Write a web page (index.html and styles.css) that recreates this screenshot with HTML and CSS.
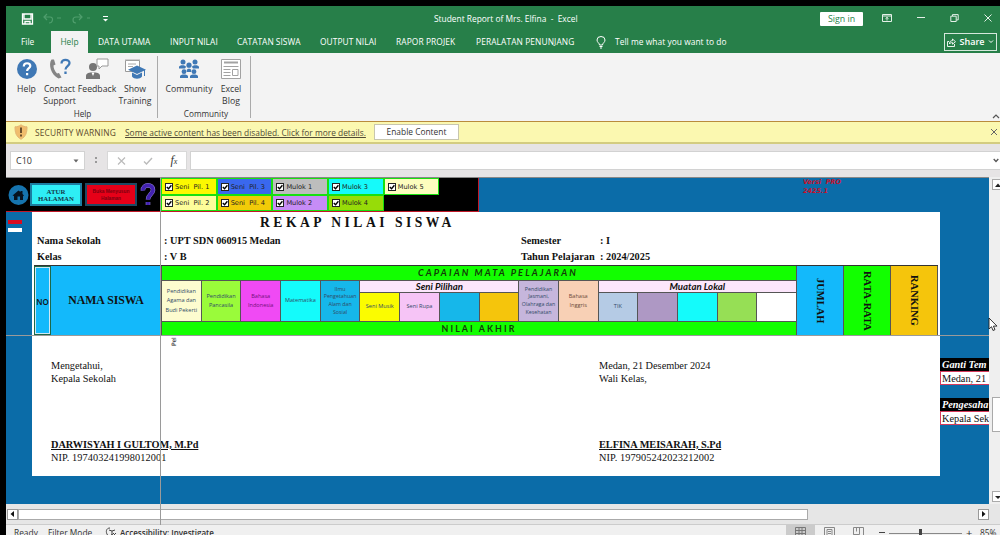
FILE: index.html
```html
<!DOCTYPE html>
<html lang="id">
<head>
    <meta charset="UTF-8">
    <meta name="viewport" content="width=device-width, initial-scale=1.0">
    <title>Student Report of Mrs. Elfina - Excel</title>
    <link rel="stylesheet" href="styles.css">
</head>
<body>

<div class="window">

    <!-- Title bar -->
    <div class="titlebar">
        <div class="quick">
            <svg width="13" height="12" viewBox="0 0 13 12" fill="none" stroke="#fff" stroke-width="1.3"><path d="M1.500 1h10v10h-10zM3 1v5h7V1M4 11V8.500h5v2.500"/></svg>
            <svg class="undo" width="24" height="12" viewBox="0 0 24 12" fill="none" stroke="#4f9e6d" stroke-width="1.200"><path d="M5 1L2 4l3 3M2 4h6c4 0 3 6-1 6M15 5h4"/></svg>
            <svg class="redo" width="24" height="12" viewBox="0 0 24 12" fill="none" stroke="#4f9e6d" stroke-width="1.200"><path d="M8 1l3 3-3 3M11 4H5c-4 0-4 6 0 6M16 5h3"/></svg>
            <svg class="more" width="7" height="8" viewBox="0 0 7 8"><path d="M1 1.500h5" stroke="#fff"/><path d="M1 4h5L3.500 6.500z" fill="#fff"/></svg>
        </div>
        <div class="doc-title">Student Report of Mrs. Elfina&nbsp; -&nbsp; Excel</div>
        <div class="win-buttons">
            <button class="signin">Sign in</button>
            <svg width="10" height="8" viewBox="0 0 10 8" fill="none" stroke="#e4f0e8"><path d="M.5.500h9v7h-9zM.5 2h9M5 6.500V3.500M3.500 4.700L5 3.400l1.500 1.300"/></svg>
            <svg width="8" height="8" viewBox="0 0 8 8" fill="none" stroke="#e4f0e8"><path d="M0 3.500h8"/></svg>
            <svg width="9" height="8" viewBox="0 0 9 8" fill="none" stroke="#e4f0e8"><path d="M.8 2.200h5.400v5.300H.8zM2.500 2V.6h5.700v5.300H6.500"/></svg>
            <svg width="8" height="8" viewBox="0 0 8 8" fill="none" stroke="#e4f0e8"><path d="M.5.500l7 7M7.500.500l-7 7"/></svg>
        </div>
    </div>

    <!-- Ribbon tabs -->
    <div class="tabs">
        <span class="tab file">File</span>
        <span class="tab active">Help</span>
        <span class="tab data">DATA UTAMA</span>
        <span class="tab input">INPUT NILAI</span>
        <span class="tab catatan">CATATAN SISWA</span>
        <span class="tab output">OUTPUT NILAI</span>
        <span class="tab rapor">RAPOR PROJEK</span>
        <span class="tab alat">PERALATAN PENUNJANG</span>
        <svg class="bulb" width="10" height="13" viewBox="0 0 10 13" fill="none" stroke="#fff"><path d="M3.500 9c0-2-2.500-2.500-2.500-5a4 3.500 0 0 1 8 0c0 2.500-2.500 3-2.500 5zM3.500 10.500h3M4 12h2"/></svg>
        <span class="tab tell">Tell me what you want to do</span>
        <button class="share">
            <svg width="9" height="9" viewBox="0 0 9 9" fill="none" stroke="#fff" stroke-width=".9"><path d="M2 3.500H.5v5h7V6M2.500 6c0-2.500 1-3.300 3-3.300V1l3 2.700-3 2.500V4.600c-1.500 0-2.500.4-3 1.400z"/></svg>
            Share
            <svg width="6" height="4" viewBox="0 0 6 4" fill="none" stroke="#fff"><path d="M1 .5l2 2 2-2"/></svg>
        </button>
    </div>

    <!-- Ribbon -->
    <div class="ribbon">
        <div class="group group-help">
            <div class="commands">
                <div class="cmd c-help">
                    <svg width="22" height="22" viewBox="0 0 22 22"><circle cx="11" cy="11" r="10" fill="#3f78b5"/><path d="M7.800 8.500c0-4.500 6.500-4 6.500-.5 0 2.200-3.200 2.200-3.200 5M11.100 15v2.300" fill="none" stroke="#fff" stroke-width="2.200"/></svg>
                    <span>Help</span>
                </div>
                <div class="cmd c-contact">
                    <svg width="24" height="22" viewBox="0 0 24 22"><path d="M3.500 1.500C0 6 3 17 10.500 20.500l3-1-2.500-4.500-2 .5C6.500 13 5.500 10 5.500 7.500L7.500 6.500 6 1.500z" fill="#858585"/><path d="M13.500 5.500c0-5 8-4.500 8-.5 0 3.200-4 3-4 6.500M17.500 13.500v2.500" fill="none" stroke="#3f78b5" stroke-width="2.300"/></svg>
                    <span>Contact<br>Support</span>
                </div>
                <div class="cmd c-feedback">
                    <svg width="24" height="22" viewBox="0 0 24 22"><circle cx="8" cy="9" r="4" fill="#757575"/><path d="M1 21v-3.500c0-4.500 14-4.500 14 0V21z" fill="#757575"/><path d="M12 1h11v7h-6l-3 3V8h-2z" fill="#fff" stroke="#999"/><path d="M6.500 14.500h3L8 18z" fill="#fff"/></svg>
                    <span>Feedback</span>
                </div>
                <div class="cmd c-training">
                    <svg width="22" height="22" viewBox="0 0 22 22"><path d="M1.500 2.500h14v11h-14z" fill="#fff" stroke="#999"/><path d="M1 2h15M4 6h8M4 8.500h5" stroke="#aaa"/><path d="M13 7.500l9 4.200-9 4.300-9-4.300z" fill="#3f78b5"/><path d="M8 14.500v4c2 3 8 3 10 0v-4l-5 2.500z" fill="#3f78b5"/><path d="M20.500 12v6" stroke="#3f78b5"/></svg>
                    <span>Show<br>Training</span>
                </div>
            </div>
            <div class="group-name">Help</div>
        </div>
        <div class="group group-community">
            <div class="commands">
                <div class="cmd c-community">
                    <svg width="22" height="22" viewBox="0 0 22 22" fill="#3f78b5"><circle cx="5" cy="4" r="2.500"/><circle cx="17" cy="4" r="2.500"/><circle cx="11" cy="7.200" r="2.600"/><path d="M1 10.500V9c0-2.500 7-2.500 7 0l-1 1.500zM14 9c0-2.500 7-2.500 7 0v1.500h-6z"/><circle cx="6" cy="13.700" r="2.400"/><circle cx="16" cy="13.700" r="2.400"/><path d="M8.700 12.500c0-2.500 4.600-2.500 4.600 0v1.500H8.700zM2 20v-1.700c0-2.500 8-2.500 8 0V20zM12 20v-1.700c0-2.500 8-2.500 8 0V20z"/></svg>
                    <span>Community</span>
                </div>
                <div class="cmd c-blog">
                    <svg width="22" height="22" viewBox="0 0 22 22" fill="none" stroke="#a2a2a2"><path d="M1.500 1.500h19v19h-19z" fill="#fff"/><path d="M4 4.500h14" stroke-width="2"/><path d="M3.500 8.500h15M3.500 11.500h7M3.500 14.500h7M3.500 17.500h7M12.500 11.500h5.500v6h-5.500z"/></svg>
                    <span>Excel<br>Blog</span>
                </div>
            </div>
            <div class="group-name">Community</div>
        </div>
        <svg class="collapse" width="8" height="5" viewBox="0 0 8 5" fill="none" stroke="#555" stroke-width="1.200"><path d="M1 4l3-3 3 3"/></svg>
    </div>

    <!-- Security warning -->
    <div class="warning">
        <svg width="14" height="16" viewBox="0 0 14 16"><path d="M7 .8c2 1.500 4 2 6 2 0 6-1 9.500-6 12.500C2 12.300 1 8.800 1 2.800c2 0 4-.5 6-2z" fill="#f0bd6c" stroke="#e3b674"/><path d="M7 3.500v5.500M7 10.500v2" stroke="#5b4326" stroke-width="1.800"/></svg>
        <span class="warn-label">SECURITY WARNING</span>
        <span class="warn-text">Some active content has been disabled. Click for more details.</span>
        <button class="enable">Enable Content</button>
        <svg class="warn-close" width="8" height="8" viewBox="0 0 8 8" fill="none" stroke="#666"><path d="M1 1l6 6M7 1L1 7"/></svg>
    </div>

    <!-- Formula bar -->
    <div class="formula">
        <div class="namebox">C10
            <svg width="6" height="4" viewBox="0 0 6 4"><path d="M.5.500h5L3 3.500z" fill="#666"/></svg>
        </div>
        <div class="dots"></div>
        <div class="fx">
            <svg width="9" height="8" viewBox="0 0 9 8" fill="none" stroke="#bbb" stroke-width="1.200"><path d="M1 .5l7 7M8 .5l-7 7"/></svg>
            <svg width="10" height="8" viewBox="0 0 10 8" fill="none" stroke="#bbb" stroke-width="1.400"><path d="M1 4.500L3.500 7 9 1"/></svg>
            <span><i>f</i><small>x</small></span>
        </div>
        <div class="formula-input">
            <svg width="6" height="5" viewBox="0 0 6 5" fill="none" stroke="#555" stroke-width="1.300"><path d="M.7 1L3 3.500 5.300 1"/></svg>
        </div>
    </div>

    <!-- Worksheet -->
    <div class="work">
        <div class="sheet">
            <div class="top">
                <div class="toolbar">
                    <div class="macros">
                        <svg width="21" height="22" viewBox="0 0 21 22"><circle cx="10.500" cy="11" r="10" fill="#1674ae"/><path d="M4.500 11.500l6-5 2 1.600V7h2v3l1.500 1.500-1 .8V16h-3v-3.500H9.500V16h-3.500v-4z" fill="#07121e"/></svg>
                        <button class="btn-atur">ATUR<br>HALAMAN</button>
                        <button class="btn-red">Buka Menyusun<br>Halaman</button>
                        <svg width="16" height="24" viewBox="0 0 16 24" fill="none"><path d="M3 7.500c-.5-7 10.500-6.500 10-.5-.3 4.500-5 4.500-5 9.500M8 19v3" stroke="#8d80d8" stroke-width="4.600"/><path d="M3 7.500c-.5-7 10.500-6.500 10-.5-.3 4.500-5 4.500-5 9.500M8 19v3" stroke="#4322b0" stroke-width="3.600"/></svg>
                    </div>
                    <div class="checks">
                        <label class="check c1"><svg viewBox="0 0 9 9"><path d="M2 4.500l2 2 3.200-4"/></svg>Seni&nbsp; Pil. 1</label>
                        <label class="check c2"><svg viewBox="0 0 9 9"><path d="M2 4.500l2 2 3.200-4"/></svg>Seni&nbsp; Pil. 3</label>
                        <label class="check c3"><svg viewBox="0 0 9 9"><path d="M2 4.500l2 2 3.200-4"/></svg>Mulok 1</label>
                        <label class="check c4"><svg viewBox="0 0 9 9"><path d="M2 4.500l2 2 3.200-4"/></svg>Mulok 3</label>
                        <label class="check c5"><svg viewBox="0 0 9 9"><path d="M2 4.500l2 2 3.200-4"/></svg>Mulok 5</label>
                        <label class="check c6"><svg viewBox="0 0 9 9"><path d="M2 4.500l2 2 3.200-4"/></svg>Seni&nbsp; Pil. 2</label>
                        <label class="check c7"><svg viewBox="0 0 9 9"><path d="M2 4.500l2 2 3.200-4"/></svg>Seni&nbsp; Pil. 4</label>
                        <label class="check c8"><svg viewBox="0 0 9 9"><path d="M2 4.500l2 2 3.200-4"/></svg>Mulok 2</label>
                        <label class="check c9"><svg viewBox="0 0 9 9"><path d="M2 4.500l2 2 3.200-4"/></svg>Mulok 4</label>
                    </div>
                </div>
                <div class="version">Versi&nbsp; PRO<br>2425.1</div>
            </div>

            <div class="body">
                <div class="marks">
                    <div class="mark red"></div>
                    <div class="mark"></div>
                </div>
                <div class="page">
                    <h1><span>REKAP NILAI SISWA</span></h1>
                    <div class="info">
                        <span>Nama Sekolah</span><span>: UPT SDN 060915 Medan</span><span>Semester</span><span>: I</span>
                        <span>Kelas</span><span>: V B</span><span>Tahun Pelajaran</span><span>: 2024/2025</span>
                    </div>

                    <div class="rekap">
                        <div class="no">NO</div>
                        <div class="nama">NAMA SISWA</div>
                        <div class="mapel">
                            <div class="cell head">CAPAIAN MATA PELAJARAN</div>
                            <div class="cell tall cream">Pendidikan<br>Agama dan<br>Budi Pekerti</div>
                            <div class="cell tall lime">Pendidikan<br>Pancasila</div>
                            <div class="cell tall pink">Bahasa<br>Indonesia</div>
                            <div class="cell tall cyan">Matematika</div>
                            <div class="cell tall tight blue">Ilmu<br>Pengetahuan<br>Alam dan<br>Sosial</div>
                            <div class="cell sub seni">Seni Pilihan</div>
                            <div class="cell tall tight lilac">Pendidikan<br>Jasmani,<br>Olahraga dan<br>Kesehatan</div>
                            <div class="cell tall peach">Bahasa<br>Inggris</div>
                            <div class="cell sub mulok">Muatan Lokal</div>
                            <div class="cell yellow">Seni Musik</div>
                            <div class="cell rose">Seni Rupa</div>
                            <div class="cell blue"></div>
                            <div class="cell gold"></div>
                            <div class="cell steel">TIK</div>
                            <div class="cell purple"></div>
                            <div class="cell cyan"></div>
                            <div class="cell leaf"></div>
                            <div class="cell white"></div>
                            <div class="cell foot">NILAI AKHIR</div>
                        </div>
                        <div class="side sky"><span>JUMLAH</span></div>
                        <div class="side green"><span>RATA-RATA</span></div>
                        <div class="side gold"><span>RANKING</span></div>
                    </div>

                    <div class="peek">Pel</div>

                    <div class="signs">
                        <div class="sign">
                            <p>Mengetahui,<br>Kepala Sekolah</p>
                            <p><b>DARWISYAH I GULTOM, M.Pd</b><br><span class="nip">NIP. 197403241998012001</span></p>
                        </div>
                        <div class="sign">
                            <p>Medan, 21 Desember 2024<br>Wali Kelas,</p>
                            <p><b>ELFINA MEISARAH, S.Pd</b><br><span class="nip">NIP. 197905242023212002</span></p>
                        </div>
                    </div>
                </div>
                <div class="extra">
                    <div class="extra-head">Ganti Tem</div>
                    <div class="extra-val">Medan, 21</div>
                    <div class="extra-head second">Pengesaha</div>
                    <div class="extra-val">Kepala Seko</div>
                </div>
            </div>
        </div>

        <div class="vscroll">
            <div class="arrow"><svg width="8" height="5" viewBox="0 0 8 5"><path d="M4 .5L7 4H1z" fill="#222"/></svg></div>
            <div class="vthumb"></div>
            <div class="arrow"><svg width="8" height="5" viewBox="0 0 8 5"><path d="M4 4L7 1H1z" fill="#222"/></svg></div>
        </div>

        <!-- Frozen pane lines and cursor -->
        <div class="freeze-v"></div>
        <div class="freeze-h"></div>
        <svg class="cursor" width="10" height="15" viewBox="0 0 10 15"><path d="M1 1v11l2.500-2.300L5 13.500l2-.9-1.600-3.500H9z" fill="#fff" stroke="#222" stroke-width=".9"/></svg>
    </div>

    <div class="hscroll">
        <div class="hbtn"><svg width="5" height="6" viewBox="0 0 5 6"><path d="M4 0v6L.5 3z" fill="#111"/></svg></div>
        <div class="hthumb"></div>
        <div class="hbtn last"><svg width="5" height="6" viewBox="0 0 5 6"><path d="M1 0v6l3.500-3z" fill="#111"/></svg></div>
    </div>

    <!-- Status bar -->
    <div class="status">
        <span class="ready">Ready</span>
        <span class="filter">Filter Mode</span>
        <svg class="acc" width="12" height="11" viewBox="0 0 12 11" fill="none" stroke="#444"><path d="M5 1C1 1 .5 5 2.500 8M4 3l3 1 3-1M7 4v3l-2 3M7 7l2 3M8 6l3 3M11 6L8 9"/></svg>
        <span class="access">Accessibility: Investigate</span>
        <div class="views">
            <span class="view on"><svg width="11" height="11" viewBox="0 0 11 11" fill="none" stroke="#777"><path d="M.5.500h10v10H.5zM.5 3.500h10M.5 6.500h10M4 .5v10M7 .5v10"/></svg></span>
            <span class="view"><svg width="11" height="11" viewBox="0 0 11 11" fill="none" stroke="#888"><path d="M.5.500h10v10H.5zM3 2.500h5v7H3zM4 4.500h3M4 6.500h3"/></svg></span>
            <span class="view"><svg width="11" height="11" viewBox="0 0 11 11" fill="none" stroke="#888"><path d="M.5.500h10v10M.5.500v7h6v-7M3.500.5v4M.5 7.500h4"/></svg></span>
        </div>
        <span class="minus"></span>
        <div class="zoom-track"><i></i></div>
        <span class="plus">+</span>
        <span class="percent">85%</span>
    </div>
</div>

</body>
</html>
```
FILE: styles.css
```css
* {
    box-sizing: border-box;
}

body {
    margin: 0;
    width: 1000px;
    height: 535px;
    padding: 6px 0 0 6px;
    background-color: #000;
    font-family: "Open Sans", "Noto Sans", sans-serif;
    font-size: 8.4px;
    color: #333;
    overflow: hidden;
}

svg {
    display: block;
    flex: none;
}

button {
    font: inherit;
    margin: 0;
    padding: 0;
}

.window {
    width: 994px;
    height: 529px;
    display: flex;
    flex-direction: column;
    background-color: #e6e6e6;
    overflow: hidden;
    white-space: nowrap;
}

/* Title bar */
.titlebar {
    height: 25px;
    flex: none;
    display: grid;
    grid-template-columns: 428px 386px 180px;
    align-items: center;
    background-color: #277f49;
    color: #fff;
}

.quick {
    display: flex;
    align-items: center;
    padding-left: 15px;
}

.undo {
    margin-left: 8px;
}

.redo {
    margin-left: 5px;
}

.more {
    margin-left: 7px;
}

.win-buttons {
    display: flex;
    align-items: center;
    height: 100%;
    padding-bottom: 2px;
}

.signin {
    width: 43px;
    height: 14px;
    margin: 3px 19px 0 0;
    background-color: #fff;
    border: none;
    border-radius: 1px;
    color: #277f49;
    font-size: 8.8px;
    line-height: 14px;
}

.win-buttons svg + svg {
    margin-left: 25px;
}

/* Tabs */
.tabs {
    height: 22px;
    flex: none;
    display: flex;
    align-items: center;
    background-color: #277f49;
    color: #fff;
    line-height: 22px;
}

.file {
    padding-left: 15px;
    width: 45px;
}

.active {
    width: 37px;
    height: 22px;
    background-color: #f3f3f3;
    color: #277f49;
    text-align: center;
}

.data {
    margin-left: 10px;
    width: 72px;
}

.input {
    width: 67px;
    letter-spacing: 0.05px;
}

.catatan {
    width: 83px;
}

.output {
    width: 76px;
    letter-spacing: 0.05px;
}

.rapor {
    width: 80px;
    letter-spacing: 0.1px;
}

.alat {
    width: 120px;
    letter-spacing: 0.1px;
}

.tell {
    letter-spacing: 0.05px;
}

.bulb {
    margin-right: 9px;
}

.share {
    margin-left: auto;
    margin-right: 3px;
    width: 53px;
    height: 18px;
    display: flex;
    align-items: center;
    justify-content: center;
    gap: 4px;
    background: none;
    border: 1px solid #d5e8dc;
    color: #fff;
    font-size: 9px;
    font-weight: 600;
}

/* Ribbon */
.ribbon {
    height: 68px;
    flex: none;
    display: flex;
    background-color: #f3f3f3;
    position: relative;
    font-size: 8.7px;
    line-height: 12px;
}

.group {
    margin: 3px 0;
    height: 62px;
    display: flex;
    flex-direction: column;
    justify-content: space-between;
    border-right: 1px solid #aaa;
}

.group-help {
    width: 152px;
    padding-left: 2px;
}

.group-community {
    width: 93px;
    padding-left: 4px;
}

.commands {
    display: flex;
}

.cmd {
    display: flex;
    flex-direction: column;
    align-items: center;
    text-align: center;
}

.cmd svg {
    margin: 2px 0 3px;
}

.c-help {
    width: 37px;
}

.c-contact {
    width: 29px;
}

.c-feedback {
    width: 46px;
}

.c-training {
    width: 30px;
}

.c-community {
    width: 54px;
}

.c-blog {
    width: 30px;
}

.group-name {
    height: 7px;
    line-height: 6px;
    font-size: 8.2px;
    text-align: center;
}

.collapse {
    position: absolute;
    right: 0;
    bottom: 2px;
}

/* Security warning */
.warning {
    height: 23px;
    flex: none;
    display: flex;
    align-items: center;
    padding-left: 8px;
    background-color: #fbf8b0;
    border-top: 1px solid #b98b3c;
    border-bottom: 2px solid #d3cc81;
}

.warn-label {
    width: 90px;
    margin-left: 7px;
    color: #5d4a2d;
    font-weight: 500;
    letter-spacing: 0.13px;
}

.warn-text {
    width: 240px;
    text-decoration: underline;
    color: #514a36;
}

.enable {
    width: 85px;
    height: 16px;
    margin-left: 9px;
    background-color: #fff;
    border: 1px solid #c8c6ae;
    color: #333;
    line-height: 14px;
    font-size: 8.4px;
}

.warn-close {
    margin-left: auto;
    margin-right: 2px;
}

/* Formula bar */
.formula {
    height: 33px;
    flex: none;
    display: flex;
    padding: 7px 0 7px 4px;
    background-color: #e6e4e5;
}

.formula > div {
    height: 19px;
}

.namebox {
    width: 75px;
    display: flex;
    align-items: center;
    justify-content: space-between;
    padding: 0 5px;
    background-color: #fff;
    border: 1px solid #d2d2d2;
    font-size: 9px;
}

.dots {
    width: 2px;
    margin: 0 10px;
    background: radial-gradient(circle, #999 0.8px, transparent 1px) 0 5px / 2px 4px;
    background-repeat: repeat-y;
    background-clip: content-box;
    padding: 5px 0;
}

.fx {
    width: 80px;
    display: flex;
    align-items: center;
    justify-content: space-around;
    background-color: #fff;
    border: 1px solid #d8d8d8;
    font: 12px "Liberation Serif", serif;
    line-height: 16px;
}

.fx small {
    font-size: 8px;
    font-style: italic;
}

.formula-input {
    flex: 1;
    margin-left: 3px;
    display: flex;
    align-items: center;
    justify-content: flex-end;
    padding-right: 1px;
    background-color: #fff;
    border: 1px solid #d2d2d2;
    border-right: none;
}

/* Worksheet */
.work {
    height: 327px;
    flex: none;
    display: flex;
    position: relative;
    font-family: "Liberation Serif", serif;
    color: #111;
}

.sheet {
    width: 983px;
    height: 327px;
    background-color: #0b6ca8;
    border-top: 1px solid #888;
    overflow: hidden;
}

.top {
    display: flex;
    height: 34px;
}

.toolbar {
    width: 473px;
    display: flex;
    background-color: #000;
    border-right: 1px solid #c01828;
    border-bottom: 1px solid #c01828;
}

.macros {
    width: 155px;
    display: flex;
    align-items: center;
    padding-left: 2px;
}

.btn-atur,
.btn-red {
    width: 52px;
    height: 23px;
    border: 2px solid #1c7da0;
    background-color: #2eeef5;
    color: #143a4c;
    font-weight: bold;
    font-size: 6.8px;
    line-height: 7px;
}

.btn-atur {
    margin-left: 1px;
}

.btn-red {
    margin: 0 3px 0 3px;
    border-color: #1d4a63;
    background-color: #e60018;
    color: #7c0010;
    font: bold 4.8px/7px "Liberation Sans", sans-serif;
}

.checks {
    display: grid;
    grid-template-columns: repeat(5, 55.7px);
    grid-template-rows: 17px 16px;
}

.check {
    display: flex;
    align-items: center;
    padding-left: 3px;
    border: 1px solid #18e010;
    font: 6.6px "DejaVu Sans", sans-serif;
    color: #222;
}

.check svg {
    width: 8px;
    height: 8px;
    margin-right: 2px;
    background-color: #fff;
    outline: 1px solid #222;
    outline-offset: -1px;
    fill: none;
    stroke: #000;
    stroke-width: 1.5;
}

.c1 { background-color: #fbf800; }
.c2 { background-color: #3a68ee; }
.c3 { background-color: #bdbdbd; }
.c4 { background-color: #15fafa; }
.c5 { background-color: #fdfdbe; }
.c6 { background-color: #fdfd9a; }
.c7 { background-color: #f2cb08; }
.c8 { background-color: #c68cf6; }
.c9 { background-color: #97dc08; }

.version {
    margin-left: 324px;
    font: italic bold 6.5px/9px "DejaVu Sans", sans-serif;
    color: #c8102a;
}

.body {
    display: flex;
}

.marks {
    width: 26px;
    padding: 8px 0 0 2px;
}

.mark {
    width: 14px;
    height: 4px;
    background-color: #fff;
}

.mark.red {
    background-color: #d80c20;
    margin-bottom: 4px;
}

.page {
    width: 908px;
    height: 264px;
    padding: 1px 0 0 2px;
    background-color: #fff;
}

h1 {
    margin: 0;
    height: 20px;
    padding-left: 226px;
    font-size: 13.6px;
    line-height: 20px;
    letter-spacing: 3.5px;
}

.info {
    height: 32px;
    display: grid;
    grid-template-columns: 127px 357px 79px 1fr;
    grid-template-rows: 16px 15px;
    padding-left: 3px;
    font-size: 10.3px;
    font-weight: bold;
    line-height: 15px;
}

.rekap {
    width: 904px;
    height: 70px;
    display: flex;
    text-align: center;
    border-top: 1px solid #333;
}

.no {
    width: 17px;
    border: 1px solid #1d6848;
    outline: 1px solid #cfe8f5;
    outline-offset: -2px;
    background-color: #13b9fb;
    font: 600 8px/69px "Open Sans", sans-serif;
}

.nama {
    width: 110px;
    background-color: #13b9fb;
    font-size: 11.8px;
    font-weight: bold;
    line-height: 69px;
}

.mapel {
    width: 636px;
    display: grid;
    grid-template-columns: repeat(16, 1fr);
    grid-template-rows: 15px 12px 29px 13px;
    border-left: 1px solid #555;
    font-family: "Open Sans", sans-serif;
    font-size: 5.6px;
    line-height: 9.5px;
    color: #314a67;
}

.cell {
    display: flex;
    align-items: center;
    justify-content: center;
    border-right: 1px solid #555;
    border-bottom: 1px solid #555;
}

.tall {
    grid-row: 2 / 4;
}

.tight {
    line-height: 7.6px;
    font-size: 5.3px;
}

.head,
.foot {
    grid-column: 1 / -1;
    background-color: #12ff00;
    color: #123a08;
    font-size: 9.2px;
    font-family: Lato, sans-serif;
    font-weight: bold;
    letter-spacing: 2.1px;
}

.head {
    font-style: italic;
    padding-left: 38px;
}

.foot {
    border-bottom: none;
    font-size: 8.8px;
}

.sub {
    grid-row: 2;
    background-color: #fce6fc;
    color: #111;
    font-family: Lato, sans-serif;
    font-size: 9.6px;
    font-style: italic;
    font-weight: bold;
}

.seni {
    grid-column: 6 / 10;
}

.mulok {
    grid-column: 12 / 17;
}

.cream { background-color: #fdfccf; }
.lime { background-color: #9afb3a; }
.pink { background-color: #f04af4; color: #72107a; }
.cyan { background-color: #14fbfb; }
.blue { background-color: #16b7ea; }
.lilac { background-color: #c6b6dc; }
.peach { background-color: #f8d0b5; color: #6d4a3a; }
.yellow { background-color: #fbfc00; }
.rose { background-color: #f6c4f6; }
.gold { background-color: #f5c50c; }
.steel { background-color: #b5cbe5; }
.purple { background-color: #ae98c4; }
.leaf { background-color: #96df55; }
.white { background-color: #fff; }
.sky { background-color: #13b9fb; }
.green { background-color: #12ff00; }

.side {
    width: 47px;
    display: flex;
    align-items: center;
    justify-content: center;
    border-right: 1px solid #555;
    font-size: 10.5px;
    font-weight: bold;
}

.side span {
    writing-mode: vertical-rl;
}

.peek {
    width: 8px;
    height: 11px;
    margin-left: 136px;
    writing-mode: vertical-rl;
    transform: rotate(180deg);
    font: 6px/8px "DejaVu Sans", sans-serif;
}

.signs {
    display: grid;
    grid-template-columns: 548px 1fr;
    padding: 13px 0 0 17px;
    font-size: 10.3px;
    line-height: 13.3px;
}

.sign p {
    margin: 0 0 52px;
}

.sign b {
    text-decoration: underline;
    letter-spacing: -0.04px;
}

.nip {
    letter-spacing: 0.1px;
}

.extra {
    width: 49px;
    padding-top: 146px;
    overflow: hidden;
    font-size: 10.3px;
}

.extra-head {
    height: 13px;
    padding-left: 2px;
    background-color: #000;
    color: #fff;
    font-weight: bold;
    font-style: italic;
    line-height: 14px;
}

.second {
    margin-top: 13px;
}

.extra-val {
    height: 14px;
    width: 90px;
    padding-left: 1px;
    background-color: #fff;
    border: 1px solid #d63a5c;
    line-height: 13px;
}

.vscroll {
    width: 11px;
    padding: 2px 0 1px 3px;
    display: flex;
    flex-direction: column;
    background-color: #efefef;
}

.arrow {
    width: 12px;
    height: 11px;
    padding: 3px 0 0 1px;
    background-color: #fff;
    border: 1px solid #aaa;
}

.vthumb {
    width: 12px;
    height: 35px;
    margin: 207px 0 59px;
    background-color: #fff;
    border: 1px solid #aaa;
}

.freeze-v {
    position: absolute;
    left: 154px;
    top: 0;
    width: 1px;
    height: 348px;
    background-color: #9a9a9a;
}

.freeze-h {
    position: absolute;
    left: 0;
    top: 158px;
    width: 983px;
    height: 1px;
    background-color: #9a9a9a;
}

.cursor {
    position: absolute;
    left: 982px;
    top: 140px;
}

/* Bottom scrollbar */
.hscroll {
    height: 21px;
    flex: none;
    display: flex;
    align-items: center;
    padding: 0 11px 0 1px;
    border-bottom: 1px solid #ccc;
}

.hbtn {
    width: 11px;
    height: 11px;
    display: flex;
    align-items: center;
    justify-content: center;
    background-color: #fff;
    border: 1px solid #999;
}

.hthumb {
    width: 790px;
    height: 11px;
    background-color: #fff;
    border: 1px solid #aaa;
}

.last {
    margin-left: auto;
}

/* Status bar */
.status {
    height: 16px;
    flex: none;
    display: flex;
    background-color: #f0f0f0;
    line-height: 16px;
}

.ready {
    width: 34px;
    margin-left: 8px;
}

.filter {
    width: 57px;
}

.acc {
    margin: 2px 3px 0 0;
}

.access {
    font-size: 8px;
    font-weight: 600;
}

.views {
    display: flex;
    margin-left: auto;
}

.view {
    width: 29px;
    height: 16px;
    display: flex;
    justify-content: center;
    padding-top: 2px;
}

.on {
    background-color: #cbcbcb;
}

.minus {
    width: 6px;
    height: 1px;
    margin: 7px 4px 0 6px;
    background-color: #444;
}

.zoom-track {
    width: 73px;
    height: 1px;
    margin-top: 8px;
    background-color: #888;
}

.zoom-track i {
    display: block;
    width: 3px;
    height: 7px;
    margin-left: 30px;
    background-color: #444;
    transform: translateY(-4px);
}

.plus {
    width: 18px;
    padding-left: 4px;
    font-size: 11px;
}

.percent {
    width: 20px;
}
```
